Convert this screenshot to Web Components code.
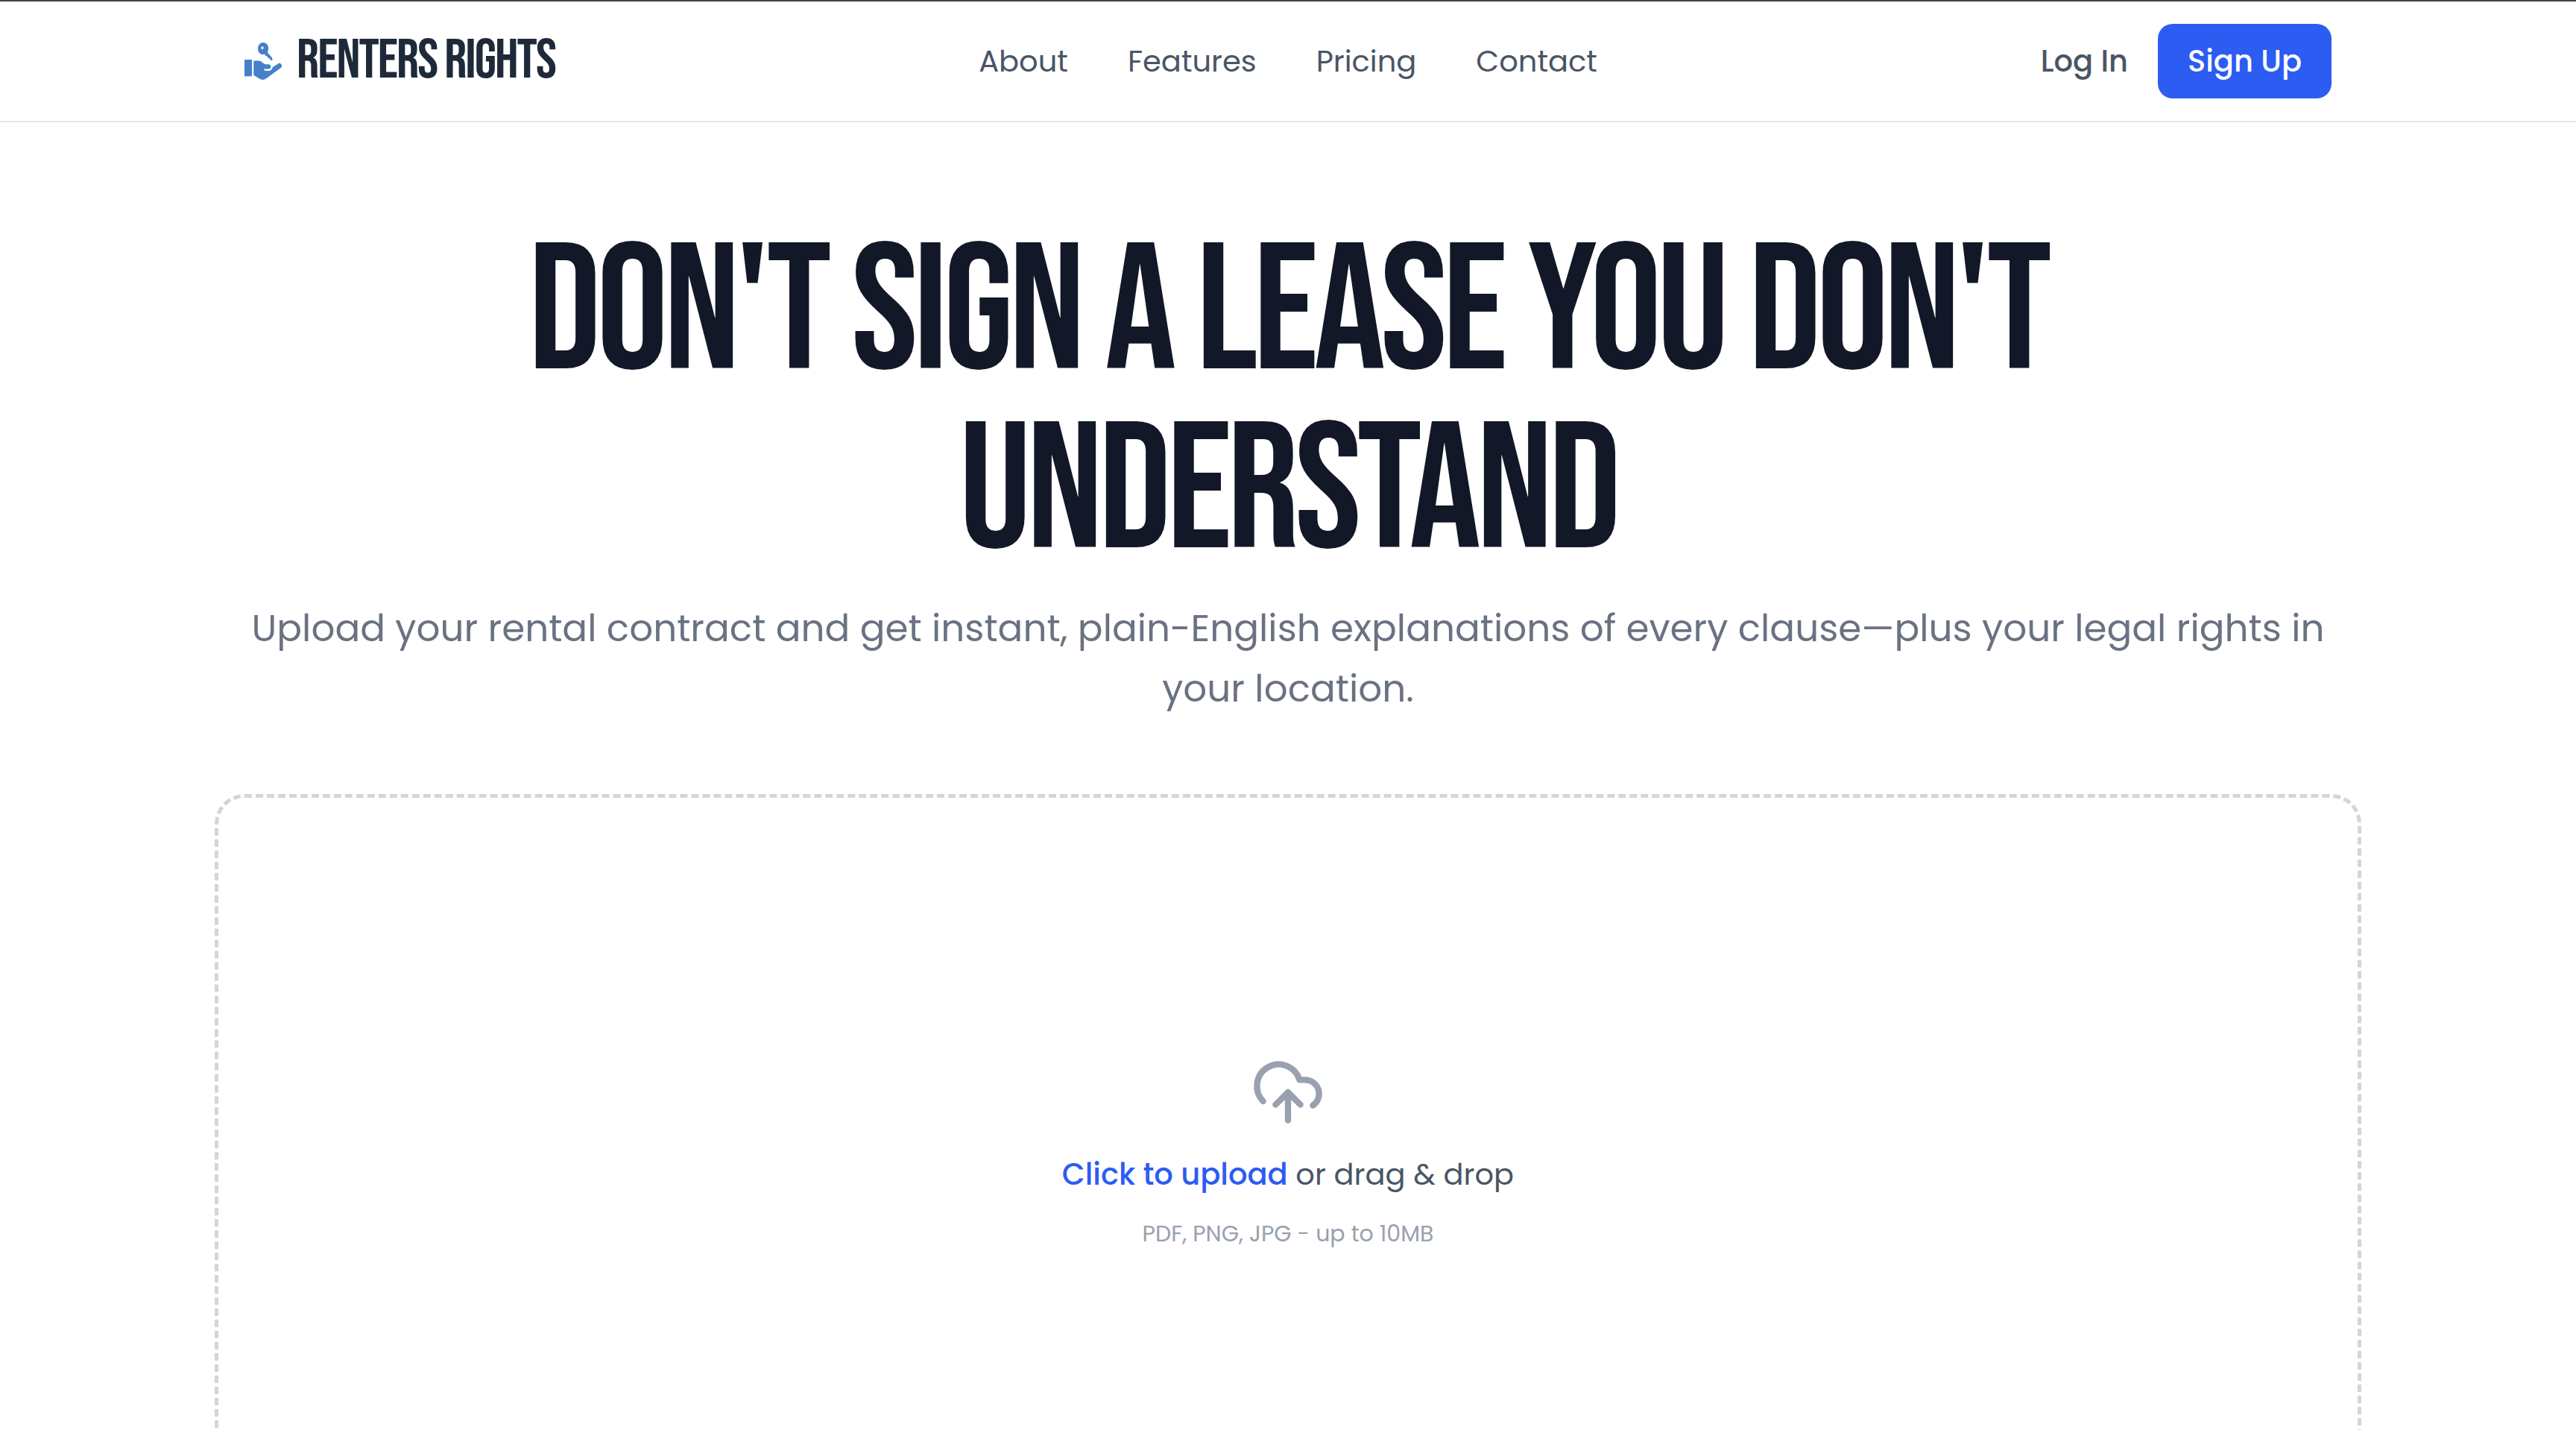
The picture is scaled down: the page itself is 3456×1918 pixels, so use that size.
<!DOCTYPE html>
<html lang="en">
<head>
<meta charset="utf-8">
<meta name="viewport" content="width=device-width, initial-scale=1">
<title>Renters Rights</title>
<style>
  :root {
    --display: "Bebas Neue", "Liberation Sans Narrow", "Liberation Sans", sans-serif;
    --body: Poppins, Inter, sans-serif;
    --ink: #121827;
    --slate: #4a5565;
    --muted: #6a7282;
    --faint: #99a1af;
    --line: #d1d5dc;
    --brand: #2c5cf2;
  }
  body {
    margin: 0;
    height: 100vh;
    overflow: hidden;
    background: #fff;
    border-top: 2px solid #473f49;
    box-sizing: border-box;
    font-family: var(--body);
    font-size: 40px;
    line-height: 60px;
    color: var(--slate);
  }
</style>
</head>
<body>
<site-header>
  <brand-logo slot="brand">RENTERS RIGHTS</brand-logo>
  <nav-link href="#about">About</nav-link>
  <nav-link href="#features">Features</nav-link>
  <nav-link href="#pricing">Pricing</nav-link>
  <nav-link href="#contact">Contact</nav-link>
  <nav-link slot="actions" strong href="#login">Log In</nav-link>
  <action-button slot="actions">Sign Up</action-button>
</site-header>
<hero-section>
  <span slot="title">DON'T SIGN A LEASE YOU DON'T UNDERSTAND</span>
  <span slot="lead">Upload your rental contract and get instant, plain-English explanations of every clause—plus your legal rights in your location.</span>
  <upload-zone></upload-zone>
</hero-section>

<script>
  const define = (name, markup, setup) => {
    const template = document.createElement("template");
    template.innerHTML = markup;
    customElements.define(name, class extends HTMLElement {
      constructor() {
        super();
        this.attachShadow({ mode: "open" }).append(template.content.cloneNode(true));
      }
      connectedCallback() { if (setup) setup(this, this.shadowRoot); }
    });
  };

  define("site-header", `
    <style>
      :host { display: block; border-bottom: 2px solid #e5e7eb; }
      header {
        display: grid; grid-template-columns: 1fr auto 1fr; align-items: center;
        max-width: 2800px; margin: 0 auto; padding: 30px 40px;
      }
      nav { display: flex; gap: 80px; }
      .actions { display: flex; align-items: center; justify-content: flex-end; gap: 40px; }
    </style>
    <header>
      <slot name="brand"></slot>
      <nav aria-label="Main"><slot></slot></nav>
      <div class="actions"><slot name="actions"></slot></div>
    </header>`);

  define("brand-logo", `
    <style>
      :host { display: block; }
      a {
        display: flex; align-items: center; gap: 20px; color: #1e2939;
        font: 400 75px/90px var(--display); letter-spacing: -2px;
        text-decoration: none; white-space: nowrap;
      }
      svg { width: 50px; height: 50px; fill: #4680c8; }
    </style>
    <a href="#home">
      <svg viewBox="0 0 50 50" aria-hidden="true">
        <path d="M0 23h10v22.300H0z"/>
        <path d="M12.300 24.600h6.700c4 0 5.500 3.700 9 4.600h4c4.600 0 4.500 6.300.2 6.300h-5.900v1.700c2.500.9 5 1 7.200.8 4-.6 2.500-3.700 6-5.900l5.800-3.900c2.800-1.700 6.300 2.300 4 5.200-.6.900-2.200 1.900-3.300 2.700L30.300 47.400c-4.300 3-6.900 3.300-10.600.9l-7.400-4.600z"/>
        <path fill-rule="evenodd" d="M25 0a7 7.500 0 0 1 7 8c0 2-.4 3.800-1.200 5.200l6.400 7.600.3 3.200h-2.300l-1.700-3-2.300-.2-.4-2.400-2.300-.5-1.400-2.300C22.500 17.500 18 14 18 8a7 8 0 0 1 7-8zM24 5.200a1.600 1.900 0 1 0 0 3.800 1.600 1.900 0 0 0 0-3.800z"/>
      </svg>
      <slot></slot>
    </a>`);

  define("nav-link", `
    <style>
      :host { display: block; }
      a { color: inherit; text-decoration: none; white-space: nowrap; }
      :host([strong]) a { font-weight: 500; }
    </style>
    <a><slot></slot></a>`,
    (host, root) => { root.querySelector("a").href = host.getAttribute("href"); });

  define("action-button", `
    <style>
      :host { display: block; }
      button {
        display: block; border: 0; border-radius: 20px; padding: 20px 40px;
        background: var(--brand); color: #fff; font: inherit; font-weight: 500;
        white-space: nowrap; cursor: pointer;
      }
    </style>
    <button type="button"><slot></slot></button>`);

  define("hero-section", `
    <style>
      :host { display: block; max-width: 2880px; margin: 0 auto; padding: 138px 40px 0; }
      h1 {
        margin: 0 0 20px; text-align: center; color: var(--ink);
        font: 400 240px/240px var(--display); letter-spacing: -6px;
      }
      p {
        margin: 0 0 101px; padding: 0 40px; text-align: center;
        font-size: 50px; line-height: 81px; color: var(--muted);
      }
    </style>
    <main>
      <h1><slot name="title"></slot></h1>
      <p><slot name="lead"></slot></p>
      <slot></slot>
    </main>`);

  define("upload-zone", `
    <style>
      :host { display: block; }
      label {
        display: flex; flex-direction: column; align-items: center; justify-content: center;
        gap: 30px; box-sizing: border-box; min-height: 960px;
        border: 5px dashed var(--line); border-radius: 40px; cursor: pointer;
      }
      svg {
        width: 100px; height: 100px; fill: none; stroke: var(--faint);
        stroke-width: 2; stroke-linecap: round; stroke-linejoin: round;
      }
      b { font-weight: 500; color: var(--brand); }
      small { font-size: 30px; line-height: 40px; color: var(--faint); }
    </style>
    <label for="lease">
      <svg viewBox="0 0 24 24" aria-hidden="true">
        <path d="M4 14.899A7 7 0 1 1 15.710 8h1.790a4.500 4.500 0 0 1 2.500 8.242"/>
        <path d="M12 12v9"/>
        <path d="m16 16-4-4-4 4"/>
      </svg>
      <span><b>Click to upload</b> or drag &amp; drop</span>
      <small>PDF, PNG, JPG - up to 10MB</small>
    </label>
    <input id="lease" type="file" accept=".pdf,.png,.jpg" hidden>`);
</script>
</body>
</html>
